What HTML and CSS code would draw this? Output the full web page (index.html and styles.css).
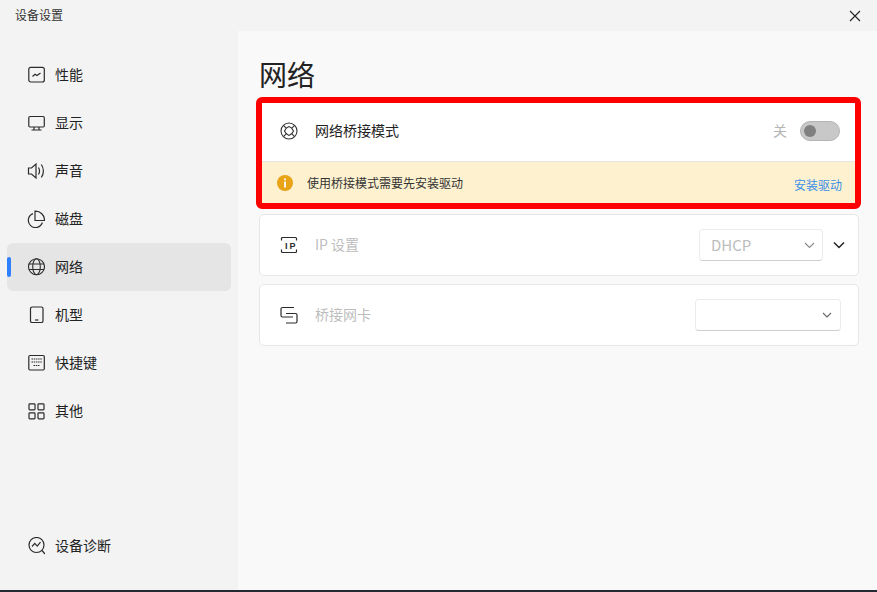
FILE: index.html
```html
<!DOCTYPE html>
<html lang="zh-CN">
<head>
<meta charset="utf-8">
<title>设备设置</title>
<link rel="stylesheet" href="styles.css">
</head>
<body>
<div class="window">
  <header class="titlebar">
    <span class="title">设备设置</span>
    <svg class="close" width="12" height="12" viewBox="0 0 12 12"><path d="M1 1l10 10M11 1L1 11" stroke="#222" stroke-width="1.1" fill="none"/></svg>
  </header>
  <div class="content">
    <nav class="sidebar">
      <ul class="nav">
        <li class="nav-item">
          <svg class="ico" width="18" height="18" viewBox="0 0 18 18" fill="none" stroke="#2b2b2b" stroke-width="1.2"><rect x="1.8" y="1.300" width="15.500" height="14.700" rx="2"/><path d="M5.500 10.500l2.500-2.200 2 1.200 3.500-2.500"/></svg>
          <span>性能</span>
        </li>
        <li class="nav-item">
          <svg class="ico" width="18" height="18" viewBox="0 0 18 18" fill="none" stroke="#2b2b2b" stroke-width="1.2"><rect x="1.800" y="2.500" width="15.500" height="10.500" rx="1.200"/><path d="M7 13v3M12 13v3M4.500 16h10"/></svg>
          <span>显示</span>
        </li>
        <li class="nav-item">
          <svg class="ico" width="18" height="18" viewBox="0 0 18 18" fill="none" stroke="#2b2b2b" stroke-width="1.2"><path d="M1.500 6h3l4.500-4v14l-4.500-4h-3z"/><path d="M11.500 5.500c1.200 2 1.200 5 0 7M14.300 2.500c2.800 3.800 2.800 9.200 0 13"/></svg>
          <span>声音</span>
        </li>
        <li class="nav-item">
          <svg class="ico" width="18" height="18" viewBox="0 0 18 18" fill="none" stroke="#2b2b2b" stroke-width="1.2"><path d="M6 3.600A7.200 7.200 0 1 0 15.400 12.500"/><path d="M8 1.200A9 9 0 0 1 17.500 10.500H8z"/></svg>
          <span>磁盘</span>
        </li>
        <li class="nav-item active">
          <svg class="ico" width="18" height="18" viewBox="0 0 18 18" fill="none" stroke="#2b2b2b" stroke-width="1.1"><circle cx="9.500" cy="8.700" r="8"/><ellipse cx="9.500" cy="8.700" rx="3.800" ry="8"/><path d="M1.900 6h15.200M1.900 11.500h15.200"/></svg>
          <span>网络</span>
        </li>
        <li class="nav-item">
          <svg class="ico" width="18" height="18" viewBox="0 0 18 18" fill="none" stroke="#2b2b2b" stroke-width="1.2"><rect x="3.500" y="1" width="12.500" height="15.500" rx="1.600"/><path d="M8 14h3.500"/></svg>
          <span>机型</span>
        </li>
        <li class="nav-item">
          <svg class="ico" width="18" height="18" viewBox="0 0 18 18" fill="none" stroke="#2b2b2b" stroke-width="1.2"><rect x="1.800" y="1.500" width="15.500" height="14.500" rx="1.200"/><path d="M4.500 5h10.500M4.500 8h10.500M6.500 11.500h6.500" stroke-dasharray="1.500 .7"/></svg>
          <span>快捷键</span>
        </li>
        <li class="nav-item">
          <svg class="ico" width="18" height="18" viewBox="0 0 18 18" fill="none" stroke="#2b2b2b" stroke-width="1.2"><rect x="2" y="1.800" width="6" height="6" rx=".8"/><rect x="11" y="1.800" width="6" height="6" rx=".8"/><rect x="2" y="10.800" width="6" height="6" rx=".8"/><rect x="11" y="10.800" width="6" height="6" rx=".8"/></svg>
          <span>其他</span>
        </li>
      </ul>
      <div class="nav-item diag">
        <svg class="ico" width="18" height="18" viewBox="0 0 18 18" fill="none" stroke="#2b2b2b" stroke-width="1.2"><circle cx="9.500" cy="8" r="7.500"/><path d="M15 13.500l3 3.500M5 9.500l2.800-3.200 2.400 2.800 3.300-4"/></svg>
        <span>设备诊断</span>
      </div>
    </nav>
    <main class="main">
      <h1 class="heading">网络</h1>
      <section class="highlight">
        <div class="row-top">
          <svg class="row-ico" width="18" height="18" viewBox="0 0 18 18" fill="none" stroke="#333" stroke-width="1.100"><circle cx="9" cy="9" r="8"/><path d="M3.400 3.400L6.200 6.200M14.600 3.400L11.800 6.200M3.400 14.600L6.200 11.800M14.600 14.600L11.800 11.800"/><path d="M9 4.500Q12 5.500 13.500 9 12 12.500 9 13.500 6 12.500 4.500 9 6 5.500 9 4.500z"/></svg>
          <span class="row-label strong">网络桥接模式</span>
          <span class="off">关</span>
          <span class="toggle"><span class="knob"></span></span>
        </div>
        <div class="notice">
          <svg width="16" height="16" viewBox="0 0 16 16"><circle cx="8" cy="8" r="8" fill="#e8a317"/><rect x="7.100" y="3.500" width="1.800" height="1.800" fill="#fff"/><rect x="7.100" y="6.500" width="1.800" height="6" fill="#fff"/></svg>
          <span class="notice-text">使用桥接模式需要先安装驱动</span>
          <a class="install">安装驱动</a>
        </div>
      </section>
      <section class="card first">
        <svg class="row-ico" width="18" height="18" viewBox="0 0 18 18" fill="none" stroke="#2b2b2b" stroke-width="1.200"><path d="M1.500 4.500V2.500A1 1 0 0 1 2.500 1.500H15.500A1 1 0 0 1 16.500 2.500V4.500M1.500 13.500V15.500A1 1 0 0 0 2.500 16.500H15.500A1 1 0 0 0 16.500 15.500V13.500"/><text x="5" y="12.500" class="ip-mark">IP</text></svg>
        <span class="row-label muted">IP 设置</span>
        <div class="select dhcp">
          <span class="select-value">DHCP</span>
          <svg width="11" height="7" viewBox="0 0 11 7" fill="none" stroke="#888" stroke-width="1.100"><path d="M1 1l4.500 4.500L10 1"/></svg>
        </div>
        <svg class="expand" width="12" height="8" viewBox="0 0 12 8" fill="none" stroke="#222" stroke-width="1.500"><path d="M1 1.500l5 5 5-5"/></svg>
      </section>
      <section class="card">
        <svg class="row-ico" width="18" height="18" viewBox="0 0 18 18" fill="none" stroke="#2b2b2b" stroke-width="1.200"><path d="M14 1.500H2.500A1.500 1.500 0 0 0 1 3V9.500A1.500 1.500 0 0 0 2.500 11H13"/><path d="M6 7.500H15.500A1.500 1.500 0 0 1 17 9V15.500A1.500 1.500 0 0 1 15.500 17H6"/></svg>
        <span class="row-label muted">桥接网卡</span>
        <div class="select nic">
          <svg width="10" height="6" viewBox="0 0 10 6" fill="none" stroke="#666" stroke-width="1.100"><path d="M1 1l4 4 4-4"/></svg>
        </div>
      </section>
    </main>
  </div>
  <div class="taskbar"></div>
</div>
</body>
</html>
```

FILE: styles.css
```css
* { box-sizing: border-box; }
html, body { margin: 0; height: 100%; }
body {
  font-family: "Noto Sans CJK SC", "Noto Sans", sans-serif;
  color: #1f1f1f;
  overflow: hidden;
}
.window { width: 877px; height: 592px; display: flex; flex-direction: column; background: #f3f3f3; }
.titlebar {
  height: 31px; flex: none; display: flex; align-items: center; justify-content: space-between;
  padding: 0 16px 0 15px;
}
.title { font-size: 12px; color: #333; padding-bottom: 2px; }
.content { flex: 1; display: flex; min-height: 0; }
.sidebar {
  width: 239px; flex: none; padding: 20px 7px 20px 7px; display: flex; flex-direction: column;
  justify-content: space-between; border-right: 1px solid #f8f8f8;
}
.nav { list-style: none; margin: 0; padding: 0; }
.nav-item {
  position: relative; height: 48px; display: flex; align-items: center; gap: 10px;
  padding-left: 20px; border-radius: 6px; font-size: 14px; color: #222;
}
.nav-item span { padding-bottom: 2px; }
.nav-item.active { background: #e5e5e5; }
.nav-item.active::before {
  content: ""; position: absolute; left: 0; top: 14px; width: 4px; height: 20px;
  border-radius: 2px; background: #2f80ff;
}
.main { flex: 1; background: #f9f9f9; padding: 0 18px 0 20px; min-width: 0; }
.heading { margin: 22px 0 0; height: 44px; font-size: 28px; font-weight: 400; line-height: 43px; color: #222; }
.highlight {
  margin-left: -3px; width: 605px; height: 112px; border: 6px solid #ff0000; border-radius: 6px;
  background: #fff; display: flex; flex-direction: column;
}
.row-top {
  height: 59px; flex: none; display: flex; align-items: center; padding: 0 0 2px 18px;
  border-bottom: 1px solid #e5e5e5;
}
.row-ico { flex: none; }
.ip-mark { font-family: "Liberation Sans", sans-serif; font-size: 9px; font-weight: 700; letter-spacing: 2px; fill: #2b2b2b; stroke: none; }
.row-label { font-size: 14px; margin-left: 17px; padding-bottom: 2px; }
.row-label.strong { color: #222; }
.row-label.muted { color: #bdbdbd; }
.off { margin-left: auto; font-size: 14px; color: #b5b5b5; padding-bottom: 2px; }
.toggle {
  width: 40px; height: 20px; margin: 0 15px 0 13px; border-radius: 10px; background: #c8c8c8;
  border: 1px solid #b4b4b4; display: flex; align-items: center; padding-left: 3px;
}
.knob { width: 12px; height: 12px; border-radius: 50%; background: #808080; }
.notice { flex: 1; background: #fdf1cf; display: flex; align-items: center; padding-left: 15px; }
.notice-text { font-size: 12px; margin-left: 14px; color: #333; }
.install { margin-left: auto; margin-right: 13px; margin-top: 4px; font-size: 12px; color: #3a8fe8; }
.card {
  height: 62px; margin-top: 8px; border: 1px solid #e7e7e7; border-radius: 5px; background: #fff;
  display: flex; align-items: center; padding-left: 20px;
}
.card.first { margin-top: 5px; }
.select {
  height: 32px; border: 1px solid #ececec; border-bottom-color: #cfcfcf; border-radius: 4px; background: #fff;
  display: flex; align-items: center; justify-content: space-between;
}
.select-value { padding-bottom: 2px; }
.dhcp { width: 124px; margin-left: auto; padding: 0 7px 0 11px; font-size: 15px; color: #bdbdbd; }
.expand { margin: 0 13px 0 10px; }
.nic { width: 146px; margin-left: auto; margin-right: 17px; padding: 0 8px 0 0; justify-content: flex-end; }
.taskbar { height: 2px; flex: none; background: #232a32; }
```
